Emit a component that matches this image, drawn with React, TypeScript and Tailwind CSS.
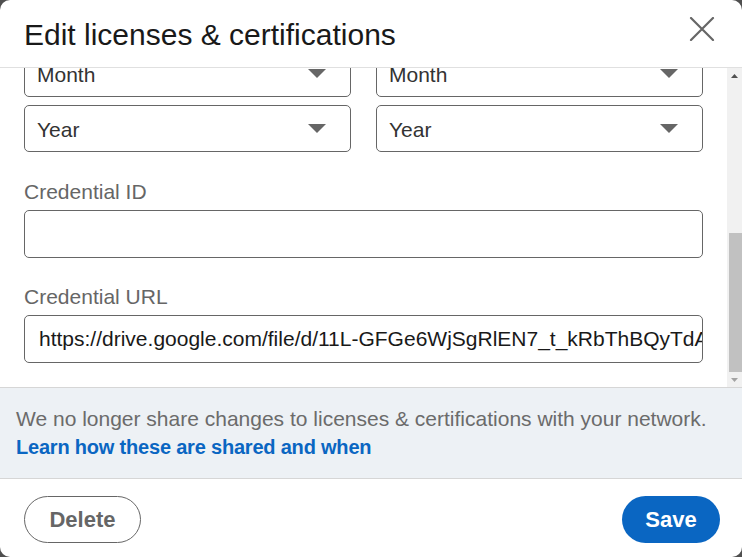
const font = { fontFamily: '"Liberation Sans", Arial, sans-serif' };

const Caret = () => (
  <svg width="18" height="9" viewBox="0 0 18 9" className="shrink-0">
    <path d="M0 0h18L9 9z" fill="#666666" />
  </svg>
);

const CloseIcon = () => (
  <svg width="26" height="24" viewBox="0 0 26 24" className="text-[#666666]">
    <path d="M2 1L24 23M24 1L2 23" stroke="currentColor" strokeWidth="2.2" strokeLinecap="round" />
  </svg>
);

function Select({ label }: { label: string }) {
  return (
    <div className="flex h-[47px] items-center justify-between rounded-[5px] border border-[#666666] pl-[12px] pr-[24px]">
      <span className="pt-[3px] text-[21px] text-[#333333]">{label}</span>
      <Caret />
    </div>
  );
}

function Field({ label, value }: { label: string; value?: string }) {
  return (
    <div className="flex flex-col">
      <label className="text-[21px] leading-[26px] text-[#666666]">{label}</label>
      <div className="mt-[5px] flex h-[48px] items-center overflow-hidden whitespace-nowrap rounded-[5px] border border-[#666666] pl-[14px] text-[21px] text-[#191919]">
        {value}
      </div>
    </div>
  );
}

export default function App() {
  return (
    <div className="h-[557px] w-[742px] overflow-hidden bg-[#4f4f4f]" style={font}>
      <div className="flex h-full flex-col overflow-hidden rounded-[10px] bg-white">
        {/* header */}
        <div className="flex h-[68px] shrink-0 items-center justify-between border-b border-[#e0e0e0] pl-[24px] pr-[27px]">
          <h2 className="pt-[2px] text-[30px] font-normal text-[#191919]">Edit licenses &amp; certifications</h2>
          <div className="-mt-[9px]">
            <CloseIcon />
          </div>
        </div>

        {/* scrolling body */}
        <div className="flex h-[319px] shrink-0 overflow-hidden">
          <div className="flex-1 overflow-hidden">
            <div className="-mt-[18px] flex flex-col pl-[24px] pr-[24px]">
              <div className="grid grid-cols-2 gap-x-[25px] gap-y-[8px]">
                <Select label="Month" />
                <Select label="Month" />
                <Select label="Year" />
                <Select label="Year" />
              </div>
              <div className="mt-[27px]">
                <Field label="Credential ID" />
              </div>
              <div className="mt-[26px]">
                <Field label="Credential URL" value="https://drive.google.com/file/d/11L-GFGe6WjSgRlEN7_t_kRbThBQyTdA" />
              </div>
            </div>
          </div>
          {/* scrollbar */}
          <div className="flex w-[15px] flex-col bg-[#f1f1f1]">
            <div className="flex h-[15px] items-center justify-center">
              <svg width="7" height="4" viewBox="0 0 7 4"><path d="M0 4L3.5 0L7 4z" fill="#505050" /></svg>
            </div>
            <div className="flex flex-1 flex-col">
              <div className="h-[150px]" />
              <div className="ml-[2px] flex-1 bg-[#c1c1c1]" />
            </div>
            <div className="flex h-[15px] items-center justify-center">
              <svg width="7" height="4" viewBox="0 0 7 4"><path d="M0 0L3.5 4L7 0z" fill="#a3a3a3" /></svg>
            </div>
          </div>
        </div>

        {/* notice */}
        <div className="flex h-[92px] shrink-0 flex-col justify-center border-y border-[#d6d6d6] bg-[#edf1f5] px-[16px]">
          <p className="text-[21px] leading-[29px] text-[#6b6b6b]">
            We no longer share changes to licenses &amp; certifications with your network.
          </p>
          <a className="text-[20px] font-semibold leading-[29px] tracking-[-0.2px] text-[#0a66c2]">
            Learn how these are shared and when
          </a>
        </div>

        {/* footer */}
        <div className="flex flex-1 items-center justify-between pl-[24px] pr-[22px] pt-[2px]">
          <button className="h-[47px] w-[117px] rounded-full border border-[#666666] text-[22px] font-semibold text-[#666666]">
            Delete
          </button>
          <button className="h-[47px] w-[98px] rounded-full bg-[#0a66c2] text-[22px] font-semibold text-white">
            Save
          </button>
        </div>
      </div>
    </div>
  );
}
